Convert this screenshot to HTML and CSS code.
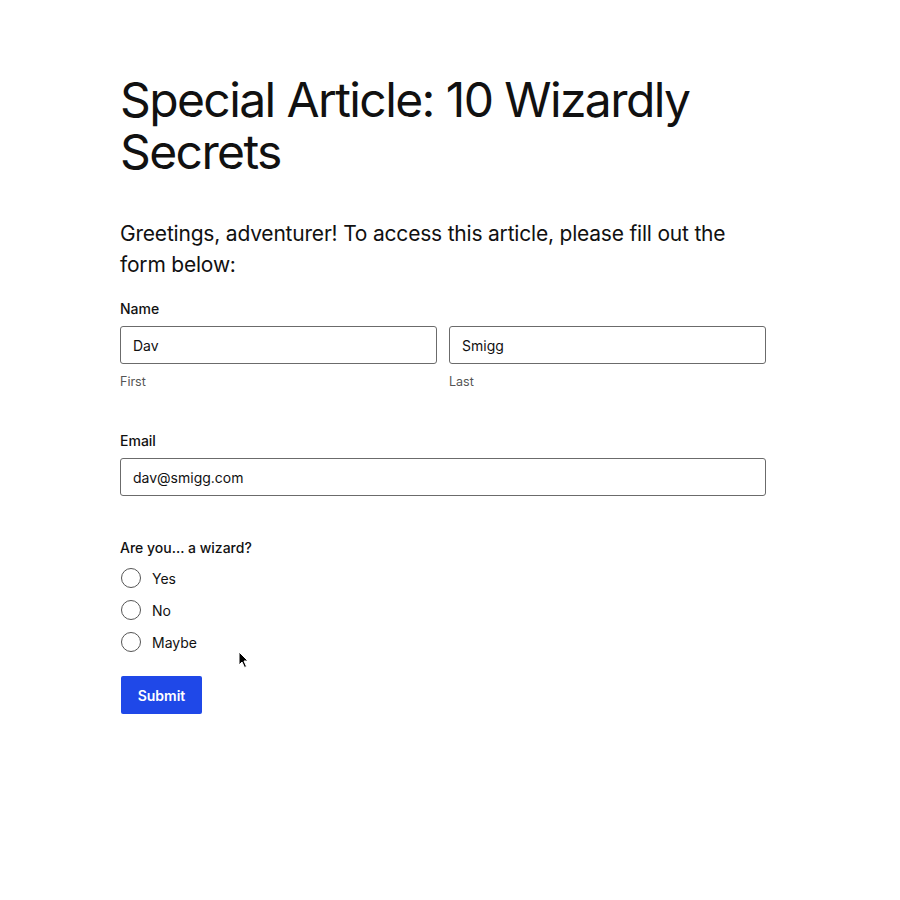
FILE: index.html
```html
<!DOCTYPE html>
<html>
<head>
    <title>Special Article</title>
    <link rel="stylesheet" href="styles.css">
</head>
<body>
    <div class="page">
        <h1>Special Article: 10 Wizardly Secrets</h1>
        <p class="intro">Greetings, adventurer! To access this article, please fill out the form below:</p>

        <form class="form">
            <!-- Nombre -->
            <div class="field">
                <label class="label">Name</label>
                <div class="name-row">
                    <div class="sub">
                        <input type="text" value="Dav">
                        <span class="hint">First</span>
                    </div>
                    <div class="sub">
                        <input type="text" value="Smigg">
                        <span class="hint">Last</span>
                    </div>
                </div>
            </div>

            <!-- Email -->
            <div class="field">
                <label class="label">Email</label>
                <input type="email" value="dav@smigg.com">
            </div>

            <!-- Pregunta -->
            <div class="field">
                <span class="label question">Are you… a wizard?</span>
                <div class="choices">
                    <label class="choice"><input type="radio" name="wizard"> Yes</label>
                    <label class="choice"><input type="radio" name="wizard"> No</label>
                    <label class="choice"><input type="radio" name="wizard"> Maybe</label>
                </div>
            </div>

            <button type="button" class="submit">Submit</button>
        </form>
    </div>

    <!-- Cursor del ratón -->
    <svg class="cursor" width="12" height="18" viewBox="0 0 12 18">
        <path d="M1 1 L1 14 L4 11 L6.5 16.5 L8.5 15.5 L6 10 L10 10 Z" fill="#000" stroke="#fff" stroke-width="1"/>
    </svg>
</body>
</html>
```

FILE: styles.css
```css
body {
    margin: 0;
    padding: 0;
    background-color: #fff;
    color: #111;
    font-family: Inter, "Noto Sans", sans-serif;
}

.page {
    width: 646px;
    padding: 74px 0 0 120px;
}

h1 {
    font-size: 48px;
    font-weight: 400;
    line-height: 52px;
    letter-spacing: -1.6px;
    margin: 0 0 40px 0;
    width: 600px;
}

.intro {
    font-size: 21px;
    line-height: 31px;
    letter-spacing: -0.2px;
    margin: 0 0 20px 0;
    width: 620px;
}

.form {
    display: flex;
    flex-direction: column;
    align-items: flex-start;
}

.field {
    display: flex;
    flex-direction: column;
    width: 100%;
    margin-bottom: 43px;
}

.label {
    font-size: 14px;
    font-weight: 500;
    margin-bottom: 9px;
}

.question {
    margin-bottom: 12px;
}

.name-row {
    display: flex;
    gap: 12px;
}

.sub {
    flex: 1;
    display: flex;
    flex-direction: column;
}

input[type="text"], input[type="email"] {
    box-sizing: border-box;
    width: 100%;
    height: 38px;
    padding: 0 12px;
    border: 1px solid #6b6b6b;
    border-radius: 3px;
    font-family: Inter, sans-serif;
    font-size: 14px;
    color: #111;
    background: #fff;
}

.hint {
    font-size: 12.5px;
    color: #555;
    margin-top: 10px;
}

.choices {
    display: flex;
    flex-direction: column;
    gap: 12px;
}

.choice {
    display: flex;
    align-items: center;
    gap: 11px;
    font-size: 14px;
}

.choice input {
    appearance: none;
    margin: 0 0 0 1px;
    width: 20px;
    height: 20px;
    border: 1px solid #555;
    border-radius: 50%;
    background: #fff;
}

.submit {
    margin-top: -19px;
    margin-left: 1px;
    background-color: #1f48e8;
    color: #fff;
    border: none;
    border-radius: 2px;
    width: 81px;
    height: 38px;
    font-family: Inter, sans-serif;
    font-size: 14px;
    font-weight: 600;
}

.cursor {
    position: absolute;
    left: 238px;
    top: 651px;
}
```
